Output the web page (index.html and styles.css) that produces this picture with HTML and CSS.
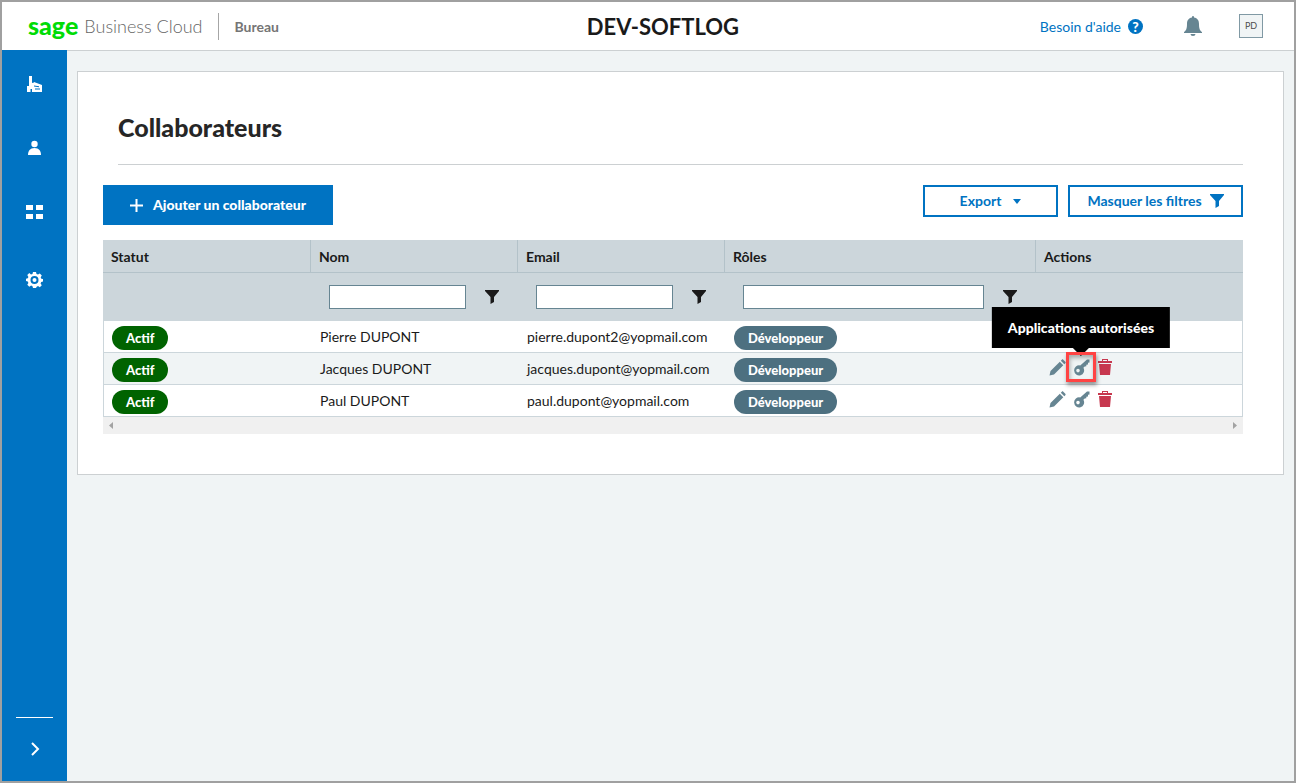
FILE: index.html
```html
<!DOCTYPE html>
<html lang="fr">
<head>
    <meta charset="utf-8">
    <title>Collaborateurs</title>
    <link rel="stylesheet" href="styles.css">
</head>
<body>
    <!-- Shared icons -->
    <svg class="sprite" aria-hidden="true">
        <symbol id="icon-filter" viewBox="0 0 14 14">
            <path d="M0 0h14v1L9 7v5l-3.500 2V7L0 1z"/>
        </symbol>
        <symbol id="icon-pencil" viewBox="0 0 17 17">
            <path d="M0.500 16.500l1-4.500L10.800 2.700l3.500 3.500L5 15.500zM11.800 1.700l1-1c.5-.5 1-.5 1.500 0l2 2c.5.500.5 1 0 1.500l-1 1z"/>
        </symbol>
        <symbol id="icon-key" viewBox="0 0 17 17">
            <path fill-rule="evenodd" d="M14 0.500h2.500v3l-1.500.3v1.600l-1.700.3v1.500l-1.600.3-1.300 1.300a5 5 0 1 1-3.200-2.300zM5 9.800a1.800 1.800 0 1 0 0 3.600 1.800 1.800 0 0 0 0-3.600z"/>
        </symbol>
        <symbol id="icon-trash" viewBox="0 0 14 17">
            <path fill-rule="evenodd" d="M4 0h6v2h4v2H0V2h4zM5 1v1h4V1zM1 5h12l-1 11H2z"/>
        </symbol>
    </svg>

    <header class="header">
        <div class="brand">
            <span class="brand-sage">sage</span>
            <span class="brand-name">Business Cloud</span>
        </div>
        <a href="#" class="desk">Bureau</a>
        <div class="company">DEV-SOFTLOG</div>
        <a href="#" class="help"><span class="help-label">Besoin d'aide</span> <span class="help-mark">?</span></a>
        <button class="bell" aria-label="Notifications">
            <svg width="18" height="20" viewBox="0 0 18 20">
                <path d="M8 1a1 1 0 0 1 2 0v.6c3.600.6 5 3 5 6.400 0 4.500.8 6.500 3 8v1H0v-1c2.200-1.500 3-3.500 3-8 0-3.400 1.400-5.800 5-6.400zM6.500 18h5a2.500 2 0 0 1-5 0z"/>
            </svg>
        </button>
        <button class="avatar">PD</button>
    </header>

    <div class="layout">
        <nav class="sidebar">
            <a href="#" aria-label="Entreprise">
                <svg width="17" height="18" viewBox="0 0 17 18">
                    <path fill-rule="evenodd" d="M3 1h3v7l2-.5V7l8 3v7H6v-3H4.500v3H1v-6h2zM8 10.500v1l5 .8v-1zM9 13.500v1h5v-1z"/>
                </svg>
            </a>
            <a href="#" aria-label="Collaborateurs">
                <svg width="17" height="18" viewBox="0 0 17 18">
                    <circle cx="8.500" cy="5" r="3.200"/>
                    <path d="M2 16c0-4 2-7 6.500-7s6.500 3 6.500 7z"/>
                </svg>
            </a>
            <a href="#" aria-label="Applications">
                <svg width="17" height="18" viewBox="0 0 17 18">
                    <path d="M0 2h7v5H0zM10 2h7v5h-7zM0 11h7v5H0zM10 11h7v5h-7z"/>
                </svg>
            </a>
            <a href="#" class="settings" aria-label="Paramètres">
                <svg width="17" height="18" viewBox="0 0 17 18">
                    <path fill-rule="evenodd" d="M7 1h3l.5 2 1.500.6 1.800-1.100 2 2L14.700 6.300l.6 1.400 1.700.3v2.500l-1.800.5-.6 1.400 1.200 1.800-2 2-1.800-1.100-1.300.6L10 17H7l-.5-1.800-1.400-.6-1.800 1.100-2-2 1.100-1.800-.6-1.400L0 10V7.700l1.800-.4.6-1.400-1.100-1.800 2-2L5 3.500 6.500 3zM8.500 5a4 4 0 1 0 0 8 4 4 0 0 0 0-8z"/>
                    <circle cx="8.500" cy="9" r="2"/>
                </svg>
            </a>
            <button class="expand" aria-label="Ouvrir le menu">
                <svg width="10" height="16" viewBox="0 0 10 16">
                    <path d="M2 2l6 6-6 6"/>
                </svg>
            </button>
        </nav>

        <main class="content">
            <section class="card">
                <h1>Collaborateurs</h1>

                <div class="toolbar">
                    <button class="btn-primary">
                        <svg width="13" height="13" viewBox="0 0 13 13"><path d="M5.500 0h2v5.500H13v2H7.500V13h-2V7.500H0v-2h5.500z"/></svg>
                        Ajouter un collaborateur
                    </button>
                    <button class="btn-outline export">
                        Export
                        <svg width="8" height="5" viewBox="0 0 8 5"><path d="M0 0h8L4 5z"/></svg>
                    </button>
                    <button class="btn-outline filters">
                        Masquer les filtres
                        <svg width="14" height="14"><use href="#icon-filter"/></svg>
                    </button>
                </div>

                <table class="grid">
                    <colgroup>
                        <col class="col">
                        <col class="col">
                        <col class="col">
                        <col class="col-wide">
                        <col>
                    </colgroup>
                    <thead>
                        <tr class="titles">
                            <th>Statut</th>
                            <th>Nom</th>
                            <th>Email</th>
                            <th>Rôles</th>
                            <th>Actions</th>
                        </tr>
                        <tr class="filter-row">
                            <td></td>
                            <td>
                                <div class="filter">
                                    <input type="text" aria-label="Filtrer par nom">
                                    <button aria-label="Filtre nom"><svg width="14" height="14"><use href="#icon-filter"/></svg></button>
                                </div>
                            </td>
                            <td>
                                <div class="filter">
                                    <input type="text" aria-label="Filtrer par email">
                                    <button aria-label="Filtre email"><svg width="14" height="14"><use href="#icon-filter"/></svg></button>
                                </div>
                            </td>
                            <td>
                                <div class="filter">
                                    <input type="text" aria-label="Filtrer par rôle">
                                    <button aria-label="Filtre rôles"><svg width="14" height="14"><use href="#icon-filter"/></svg></button>
                                </div>
                            </td>
                            <td></td>
                        </tr>
                    </thead>
                    <tbody>
                        <tr>
                            <td><span class="badge active">Actif</span></td>
                            <td>Pierre DUPONT</td>
                            <td>pierre.dupont2@yopmail.com</td>
                            <td><span class="badge role">Développeur</span></td>
                            <td></td>
                        </tr>
                        <tr>
                            <td><span class="badge active">Actif</span></td>
                            <td>Jacques DUPONT</td>
                            <td>jacques.dupont@yopmail.com</td>
                            <td><span class="badge role">Développeur</span></td>
                            <td>
                                <div class="actions">
                                    <button aria-label="Modifier"><svg width="17" height="17"><use href="#icon-pencil"/></svg></button>
                                    <button class="current" aria-label="Applications autorisées">
                                        <svg width="17" height="17"><use href="#icon-key"/></svg>
                                        <span class="tooltip">Applications autorisées</span>
                                    </button>
                                    <button class="delete" aria-label="Supprimer"><svg width="14" height="17"><use href="#icon-trash"/></svg></button>
                                </div>
                            </td>
                        </tr>
                        <tr>
                            <td><span class="badge active">Actif</span></td>
                            <td>Paul DUPONT</td>
                            <td>paul.dupont@yopmail.com</td>
                            <td><span class="badge role">Développeur</span></td>
                            <td>
                                <div class="actions">
                                    <button aria-label="Modifier"><svg width="17" height="17"><use href="#icon-pencil"/></svg></button>
                                    <button aria-label="Applications"><svg width="17" height="17"><use href="#icon-key"/></svg></button>
                                    <button class="delete" aria-label="Supprimer"><svg width="14" height="17"><use href="#icon-trash"/></svg></button>
                                </div>
                            </td>
                        </tr>
                    </tbody>
                </table>
                <div class="scrollbar">
                    <svg width="4" height="7" viewBox="0 0 4 7"><path d="M4 0v7L0 3.500z"/></svg>
                    <svg width="4" height="7" viewBox="0 0 4 7"><path d="M0 0v7l4-3.500z"/></svg>
                </div>
            </section>
        </main>
    </div>
</body>
</html>
```
FILE: styles.css
```css
* {
    box-sizing: border-box;
}

body {
    margin: 0;
    min-height: 100vh;
    display: flex;
    flex-direction: column;
    border: 2px solid #a0a0a0;
    background-color: #f0f4f5;
    color: #1a1a1a;
    font-family: Lato, sans-serif;
    font-size: 14px;
    line-height: 20px;
}

a {
    text-decoration: none;
}

button {
    padding: 0;
    border: none;
    background: none;
    font-family: inherit;
    font-size: 14px;
    line-height: 20px;
    cursor: pointer;
}

svg {
    display: block;
    fill: currentColor;
}

.sprite {
    position: absolute;
    width: 0;
    height: 0;
}

/* Header */
.header {
    display: flex;
    align-items: center;
    height: 49px;
    padding: 0 31px 0 26px;
    border-bottom: 1px solid #ccd0d2;
    background-color: #fff;
}

.brand {
    display: flex;
    align-items: center;
    gap: 6px;
    height: 27px;
    padding-right: 15px;
    border-right: 1px solid #a6a6a6;
}

.brand-sage {
    padding-bottom: 3px;
    color: #00dc06;
    font-size: 25px;
    font-weight: 900;
}

.brand-name {
    color: #666;
    font-size: 18px;
    font-weight: 300;
}

.desk {
    padding: 2px 7px 0 16px;
    color: #757575;
    font-weight: 700;
}

.company {
    flex: 1;
    padding-top: 1px;
    text-align: center;
    font-size: 22px;
    font-weight: 700;
}

.help {
    display: flex;
    align-items: center;
    gap: 7px;
    color: #0073c2;
}

.help-label {
    padding-top: 2px;
}

.help-mark {
    width: 15px;
    height: 15px;
    border-radius: 50%;
    background-color: #0073c2;
    color: #fff;
    font-size: 14px;
    font-weight: 900;
    line-height: 15px;
    text-align: center;
}

.bell {
    margin: 0 37px 0 41px;
    color: #668592;
}

.avatar {
    width: 24px;
    height: 24px;
    border: 1px solid #8099a4;
    background-color: #f0f4f5;
    color: #4d4d4d;
    font-size: 9px;
}

.layout {
    flex: 1;
    display: flex;
}

/* Sidebar */
.sidebar {
    display: flex;
    flex-direction: column;
    align-items: center;
    width: 65px;
    margin-top: -1px;
    padding: 25px 0 24px;
    background-color: #0073c2;
}

.sidebar a {
    margin-bottom: 46px;
    color: #fff;
}

.sidebar .settings {
    margin-top: 4px;
}

.expand {
    display: flex;
    justify-content: center;
    width: 37px;
    margin-top: auto;
    padding-top: 23px;
    border-top: 1px solid #fff;
}

.expand path {
    fill: none;
    stroke: #fff;
    stroke-width: 2;
}

/* Content */
.content {
    flex: 1;
    padding: 20px 10px;
}

.card {
    padding: 40px 40px 40px 25px;
    border: 1px solid #ccd0d2;
    background-color: #fff;
}

h1 {
    margin: 0 0 20px 15px;
    padding-bottom: 22px;
    border-bottom: 1px solid #ccd0d2;
    color: #262626;
    font-size: 25px;
    font-weight: 900;
    line-height: 30px;
}

.toolbar {
    display: flex;
    align-items: flex-start;
    gap: 10px;
    margin-bottom: 15px;
}

.toolbar button {
    display: flex;
    align-items: center;
    justify-content: center;
    font-weight: 700;
}

.btn-primary {
    gap: 10px;
    width: 230px;
    height: 40px;
    margin-right: auto;
    background-color: #0073c2;
    color: #fff;
}

.toolbar .btn-primary {
    font-weight: 900;
}

.btn-outline {
    height: 32px;
    border: 2px solid #0073c2;
    color: #0073c2;
}

.export {
    gap: 12px;
    width: 135px;
}

.filters {
    gap: 8px;
    width: 175px;
}

/* Table */
.grid {
    width: 100%;
    table-layout: fixed;
    border-spacing: 0;
}

.col {
    width: 207px;
}

.col-wide {
    width: 311px;
}

thead {
    background-color: #ccd6db;
}

.titles th {
    height: 33px;
    padding: 2px 8px 0;
    border-bottom: 1px solid #b3c2c9;
    border-left: 1px solid #b3c2c9;
    font-weight: 700;
    text-align: left;
}

.titles th:first-child {
    border-left: none;
}

.filter-row td {
    height: 48px;
    padding: 0 18px 0 19px;
}

.filter {
    display: flex;
    align-items: center;
    gap: 19px;
}

.filter input {
    flex: 1;
    min-width: 0;
    height: 24px;
    padding: 0 8px;
    border: 1px solid #668592;
    border-radius: 0;
    background-color: #fff;
    font-family: inherit;
    font-size: 14px;
}

.filter button {
    color: #1a1a1a;
}

tbody td {
    height: 32px;
    padding: 0 9px 0 10px;
    border-bottom: 1px solid #ccd6db;
    white-space: nowrap;
}

tbody td:first-child {
    padding-left: 8px;
    border-left: 1px solid #ccd6db;
}

tbody td:last-child {
    border-right: 1px solid #ccd6db;
}

tbody tr:nth-child(even) {
    background-color: #f0f4f5;
}

.badge {
    display: block;
    width: max-content;
    margin-top: 2px;
    padding: 0 14px;
    border-radius: 12px;
    color: #fff;
    font-size: 13px;
    font-weight: 900;
    line-height: 24px;
}

.active {
    background-color: #006300;
}

.role {
    background-color: #4d7080;
}

.actions {
    display: flex;
    gap: 4px;
    padding: 0 0 3px 2px;
}

.actions button {
    display: flex;
    align-items: center;
    justify-content: center;
    width: 20px;
    height: 20px;
    color: #668592;
}

.actions .delete {
    color: #c7384f;
}

.actions .current {
    position: relative;
}

/* Red frame round the button in use */
.current::after {
    content: "";
    position: absolute;
    inset: -5px;
    border: 3px solid #ff4343;
    box-shadow: 1px 3px 4px rgba(0, 0, 0, 0.4), inset 1px 3px 4px rgba(0, 0, 0, 0.3);
}

.tooltip {
    position: absolute;
    bottom: 29px;
    left: 50%;
    transform: translateX(-50%);
    padding: 11px 16px 10px;
    background-color: #000;
    color: #fff;
    font-weight: 900;
    white-space: nowrap;
}

.tooltip::after {
    content: "";
    position: absolute;
    top: 100%;
    left: 50%;
    margin-left: -8px;
    border: 8px solid transparent;
    border-top-color: #000;
    border-bottom: none;
}

.scrollbar {
    display: flex;
    align-items: center;
    justify-content: space-between;
    height: 17px;
    padding: 0 6px;
    background-color: #f0f0f0;
    color: #a3a3a3;
}
```
